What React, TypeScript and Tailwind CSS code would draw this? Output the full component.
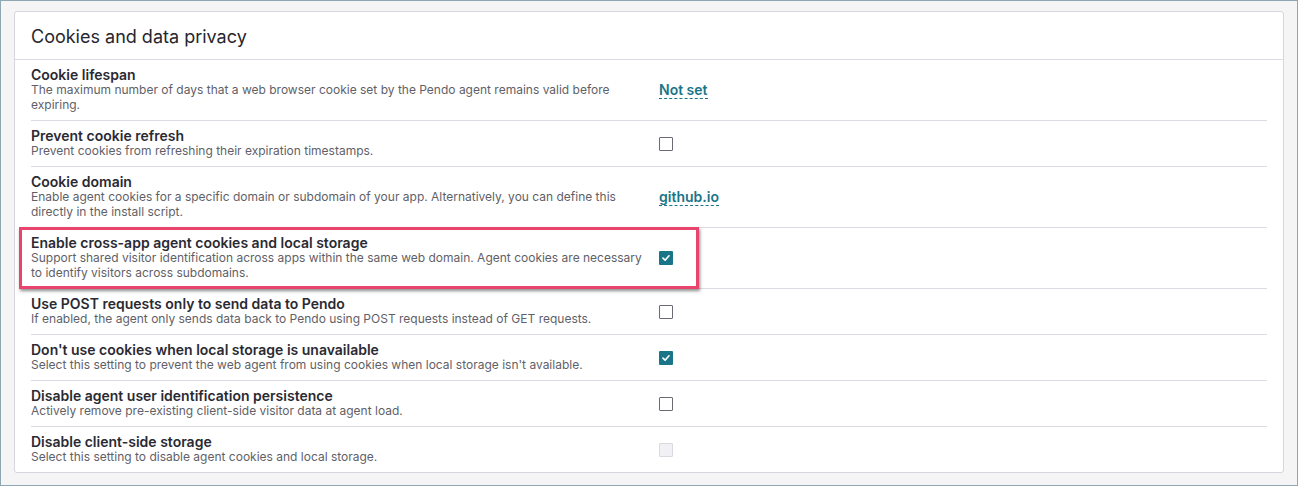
import React from "react";

type Setting = {
  title: string;
  desc: string;
  kind: "link" | "checked" | "unchecked" | "disabled";
  value?: string;
  highlight?: boolean;
};

const settings: Setting[] = [
  {
    title: "Cookie lifespan",
    desc: "The maximum number of days that a web browser cookie set by the Pendo agent remains valid before expiring.",
    kind: "link",
    value: "Not set",
  },
  {
    title: "Prevent cookie refresh",
    desc: "Prevent cookies from refreshing their expiration timestamps.",
    kind: "unchecked",
  },
  {
    title: "Cookie domain",
    desc: "Enable agent cookies for a specific domain or subdomain of your app. Alternatively, you can define this directly in the install script.",
    kind: "link",
    value: "github.io",
  },
  {
    title: "Enable cross-app agent cookies and local storage",
    desc: "Support shared visitor identification across apps within the same web domain. Agent cookies are necessary to identify visitors across subdomains.",
    kind: "checked",
    highlight: true,
  },
  {
    title: "Use POST requests only to send data to Pendo",
    desc: "If enabled, the agent only sends data back to Pendo using POST requests instead of GET requests.",
    kind: "unchecked",
  },
  {
    title: "Don't use cookies when local storage is unavailable",
    desc: "Select this setting to prevent the web agent from using cookies when local storage isn't available.",
    kind: "checked",
  },
  {
    title: "Disable agent user identification persistence",
    desc: "Actively remove pre-existing client-side visitor data at agent load.",
    kind: "unchecked",
  },
  {
    title: "Disable client-side storage",
    desc: "Select this setting to disable agent cookies and local storage.",
    kind: "disabled",
  },
];

const Checkbox: React.FC<{ kind: Setting["kind"] }> = ({ kind }) => {
  if (kind === "checked") {
    return (
      <span className="flex h-[14px] w-[14px] items-center justify-center rounded-[1px] bg-[#1b7588]">
        <svg width="10" height="10" viewBox="0 0 10 10" fill="none">
          <path d="M2 5.2 4.1 7.2 8 2.8" stroke="#fff" strokeWidth="1.7" strokeLinecap="round" strokeLinejoin="round" />
        </svg>
      </span>
    );
  }
  if (kind === "disabled") {
    return <span className="block h-[14px] w-[14px] rounded-[1px] border border-[#d9d9e0] bg-[#f1f0f5]" />;
  }
  return <span className="block h-[14px] w-[14px] rounded-[1px] border border-[#6a6a73] bg-white" />;
};

const Row: React.FC<{ s: Setting; last: boolean }> = ({ s, last }) => (
  <div className={`relative flex items-center ${last ? "" : "border-b border-[#dcdbe3]"}`}>
    {s.highlight && (
      <div className="pointer-events-none absolute left-[-12px] top-[-1px] h-[62px] w-[680px] border-[3px] border-[#e8446d] shadow-[1px_2px_3px_rgba(0,0,0,0.45)]" />
    )}
    <div className="w-[628px] shrink-0 pr-[16px] pt-[7px] pb-[8px]">
      <div className="text-[14px] font-semibold leading-[15px] text-[#2a2a33]">{s.title}</div>
      <div className="text-[12px] leading-[15px] text-[#5f5f68]">{s.desc}</div>
    </div>
    <div className="flex items-center">
      {s.kind === "link" ? (
        <span className="border-b border-dashed border-[#1b7588] text-[14px] font-semibold leading-[17px] text-[#1b7588]">
          {s.value}
        </span>
      ) : (
        <Checkbox kind={s.kind} />
      )}
    </div>
  </div>
);

export default function App() {
  return (
    <div
      className="h-[486px] w-[1298px] border border-[#8ea7b3] bg-[#f5f5f6] px-[13px] pt-[10px]"
      style={{ fontFamily: "Inter, 'Noto Sans', sans-serif" }}
    >
      <div className="rounded-[3px] border border-[#d7d6de] bg-white">
        <div className="flex h-[48px] items-center border-b border-[#dcdbe3] px-[16px] pt-[2px]">
          <h2 className="text-[18px] font-normal text-[#26262e]">Cookies and data privacy</h2>
        </div>
        <div className="px-[16px]">
          {settings.map((s, i) => (
            <Row key={s.title} s={s} last={i === settings.length - 1} />
          ))}
        </div>
      </div>
    </div>
  );
}
